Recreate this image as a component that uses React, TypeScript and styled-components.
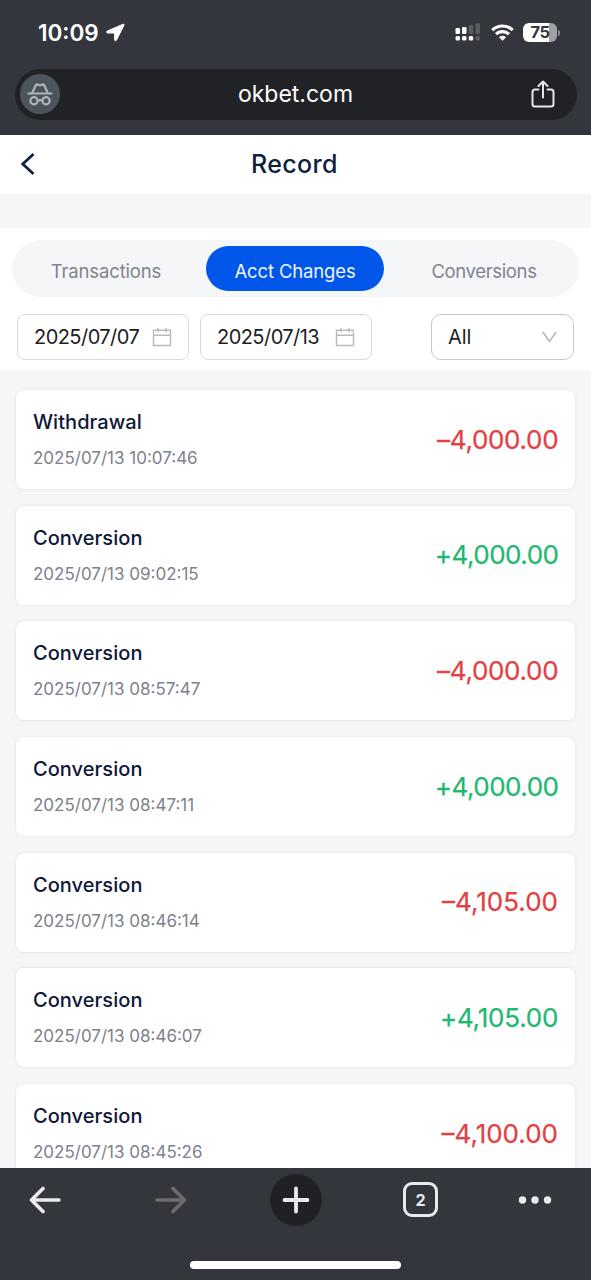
import React from "react";
import styled, { createGlobalStyle } from "styled-components";

const GlobalStyle = createGlobalStyle`
  * { box-sizing: border-box; }
  body {
    margin: 0;
    background: #f4f6f8;
    font-family: Inter, "Liberation Sans", sans-serif;
    -webkit-font-smoothing: antialiased;
  }
  svg { display: block; flex: none; }
`;

const Screen = styled.div`
  width: 591px;
  height: 1280px;
  display: flex;
  flex-direction: column;
  overflow: hidden;
  background: #f4f6f8;
`;

const BrowserTop = styled.header`
  flex: none;
  height: 135px;
  background: #33363d;
  color: #fff;
  display: flex;
  flex-direction: column;
`;

const StatusBar = styled.div`
  height: 69px;
  padding: 19px 31px 0 38px;
  display: flex;
  align-items: flex-start;
  justify-content: space-between;
`;

const StatusGroup = styled.div<{ $gap: number }>`
  display: flex;
  align-items: center;
  gap: ${(p) => p.$gap}px;
  height: 27px;
`;

const Clock = styled.span`
  font-size: 22.5px;
  line-height: 27px;
  font-weight: 600;
  letter-spacing: 0;
`;

const Battery = styled.div`
  display: flex;
  align-items: center;
  gap: 1px;
`;

const BatteryBody = styled.div`
  width: 34px;
  height: 19px;
  border-radius: 6px;
  background: linear-gradient(90deg, #fff 76%, #a0a1a4 76%);
  color: #33363d;
  font-size: 16.5px;
  font-weight: 700;
  line-height: 19px;
  letter-spacing: -0.5px;
  text-align: center;
`;

const BatteryTip = styled.div`
  width: 2px;
  height: 6px;
  border-radius: 0 2px 2px 0;
  background: #8b8c90;
`;

const AddressBar = styled.div`
  margin: 0 14px 0 15px;
  height: 51px;
  border-radius: 26px;
  background: #212226;
  display: grid;
  grid-template-columns: 50px 1fr 50px;
  align-items: center;
  padding: 0 9px 2px 5px;
`;

const Incognito = styled.div`
  width: 40px;
  height: 40px;
  border-radius: 50%;
  background: #4d555c;
  display: flex;
  align-items: center;
  justify-content: center;
`;

const Url = styled.div`
  padding-left: 3px;
  text-align: center;
  font-size: 23px;
  line-height: 30px;
`;

const PageHeader = styled.div`
  flex: none;
  height: 59px;
  background: #fff;
  display: grid;
  grid-template-columns: 60px 1fr 62px;
  align-items: center;
  padding-bottom: 2px;
`;

const BackButton = styled.button`
  border: 0;
  background: none;
  padding: 0 0 0 18px;
`;

const PageTitle = styled.h1`
  margin: 0;
  text-align: center;
  color: #10203f;
  font-size: 25px;
  line-height: 30px;
  font-weight: 500;
  letter-spacing: 0.35px;
`;

const Filters = styled.section`
  flex: none;
  margin-top: 34px;
  height: 143px;
  background: #fff;
  padding: 12px 12px 0;
`;

const Tabs = styled.div`
  height: 57px;
  border-radius: 29px;
  background: #f4f6f8;
  display: grid;
  grid-template-columns: 178px 178px 178px;
  justify-content: space-between;
  align-items: center;
  padding: 0 6px 0 5px;
`;

const Tab = styled.button<{ $active?: boolean; $spacing: number }>`
  border: 0;
  height: 45px;
  border-radius: 23px;
  padding: 4px 0 0;
  font: 400 18.5px/24px Inter, sans-serif;
  letter-spacing: ${(p) => p.$spacing}px;
  color: ${(p) => (p.$active ? "#eef5ff" : "#7f848f")};
  background: ${(p) => (p.$active ? "#0056e8" : "transparent")};
`;

const FieldRow = styled.div`
  display: flex;
  gap: 11px;
  margin: 17px 5px 0 5px;
`;

const Field = styled.div<{ $width: number; $select?: boolean }>`
  width: ${(p) => p.$width}px;
  height: 46px;
  border: 1.5px solid ${(p) => (p.$select ? "#c3c9d0" : "#d9dadc")};
  border-radius: ${(p) => (p.$select ? 10 : 8)}px;
  padding: 0 16px;
  margin-left: ${(p) => (p.$select ? "auto" : "0")};
  display: flex;
  align-items: center;
  justify-content: space-between;
  color: #1c1e24;
  font-size: 20px;
  letter-spacing: ${(p) => (p.$select ? -0.1 : -0.55)}px;
`;

const List = styled.main`
  flex: 1;
  min-height: 0;
  overflow: hidden;
  padding: 18px 15px 0 15px;
  display: flex;
  flex-direction: column;
  gap: 14.7px;
`;

const Card = styled.article`
  flex: none;
  height: 101px;
  border: 1px solid #ebedef;
  border-radius: 9px;
  background: #fff;
  box-shadow: 0 0 3px rgba(30, 40, 60, 0.04);
  padding: 0 17px;
  display: flex;
  align-items: center;
  justify-content: space-between;
`;

const CardTitle = styled.div`
  color: #101838;
  font-size: 20px;
  font-weight: 500;
  line-height: 26px;
  letter-spacing: 0.05px;
`;

const CardTime = styled.div`
  margin-top: 11px;
  color: #7d818b;
  font-size: 17px;
  line-height: 24px;
`;

const Amount = styled.div<{ $credit: boolean; $spacing: number }>`
  color: ${(p) => (p.$credit ? "#1fb871" : "#e34044")};
  font-size: 26px;
  line-height: 32px;
  letter-spacing: ${(p) => p.$spacing}px;
  margin-right: ${(p) => p.$spacing}px;
  -webkit-text-stroke: 0.25px currentColor;
`;

const BrowserBottom = styled.footer`
  flex: none;
  height: 112px;
  background: #33363d;
  display: flex;
  flex-direction: column;
  align-items: center;
`;

const Toolbar = styled.nav`
  width: 100%;
  height: 63px;
  padding: 0 22px 0 0;
  display: grid;
  grid-template-columns: 90px 161px 89px 161px 1fr;
  align-items: center;
  justify-items: center;
`;

const NewTab = styled.div`
  width: 52px;
  height: 52px;
  border-radius: 50%;
  background: #202125;
  display: flex;
  align-items: center;
  justify-content: center;
`;

const TabCount = styled.div`
  width: 35px;
  height: 35px;
  border: 3px solid #e9eaf0;
  border-radius: 9px;
  color: #e9eaf0;
  font-size: 16px;
  font-weight: 700;
  line-height: 30px;
  text-align: center;
`;

const HomeIndicator = styled.div`
  margin-top: 30px;
  width: 211px;
  height: 8px;
  border-radius: 4px;
  background: #fff;
`;

const CalendarIcon = () => (
  <svg width="20" height="20" viewBox="0 0 20 20" fill="none" stroke="#b9babd" strokeWidth="1.4">
    <path d="M1.500 3.200h17v15.300h-17zM1.500 8.200h17M6 1v4.400M14 1v4.400" />
  </svg>
);

const records = [
  { title: "Withdrawal", time: "2025/07/13 10:07:46", amount: "–4,000.00" },
  { title: "Conversion", time: "2025/07/13 09:02:15", amount: "+4,000.00" },
  { title: "Conversion", time: "2025/07/13 08:57:47", amount: "–4,000.00" },
  { title: "Conversion", time: "2025/07/13 08:47:11", amount: "+4,000.00" },
  { title: "Conversion", time: "2025/07/13 08:46:14", amount: "–4,105.00" },
  { title: "Conversion", time: "2025/07/13 08:46:07", amount: "+4,105.00" },
  { title: "Conversion", time: "2025/07/13 08:45:26", amount: "–4,100.00" },
];

// Narrow figures get looser tracking so the amounts keep an even column.
const amountSpacing = (amount: string) =>
  (amount.startsWith("+") ? -0.5 : -0.3) + (amount.includes(",1") ? 0.3 : 0);

export default function App() {
  return (
    <Screen>
      <GlobalStyle />
      <BrowserTop>
        <StatusBar>
          <StatusGroup $gap={7}>
            <Clock>10:09</Clock>
            <svg width="19" height="19" viewBox="0 0 19 19">
              <path d="M17 1.300 1.300 8c-1 .5-.7 2 .3 2h7v6.700c0 1.300 1.300 1.500 1.900.3L18 2.200c.3-.7-.2-1.200-1-.9z" fill="#fff" stroke="#fff" strokeWidth="1" strokeLinejoin="round" />
            </svg>
          </StatusGroup>
          <StatusGroup $gap={9.5}>
            <svg width="26" height="19" viewBox="0 0 26 19" fill="#fff">
              <rect x="0.500" y="5" width="4.500" height="6" rx="1.300" />
              <rect x="7" y="4" width="4.500" height="7" rx="1.300" />
              <rect x="13.700" y="2" width="4.500" height="9" rx="1.300" fill="#5b5c60" />
              <rect x="20.500" y="0.500" width="4.500" height="10.500" rx="1.300" fill="#5b5c60" />
              <rect x="0.500" y="13" width="4.500" height="4.500" rx="1.500" />
              <rect x="7" y="13" width="4.500" height="4.500" rx="1.500" />
              <rect x="13.700" y="13" width="4.500" height="4.500" rx="1.500" />
              <rect x="20.500" y="13" width="4.500" height="4.500" rx="1.500" fill="#5b5c60" />
            </svg>
            <svg width="23" height="17" viewBox="0 0 23 17" fill="none" stroke="#fff" strokeWidth="3.200">
              <path d="M1.300 6.200a14.500 14.500 0 0 1 20.400 0M5 10.200a9.300 9.300 0 0 1 13 0" />
              <path d="m11.500 16.800-3.500-3.600a5 5 0 0 1 7 0z" fill="#fff" stroke="none" />
            </svg>
            <Battery>
              <BatteryBody>75</BatteryBody>
              <BatteryTip />
            </Battery>
          </StatusGroup>
        </StatusBar>
        <AddressBar>
          <Incognito>
            <svg width="26" height="24" viewBox="0 0 26 24" fill="none" stroke="#b0b5ba" strokeWidth="2.200" strokeLinecap="round" strokeLinejoin="round">
              <path d="M1.500 11.500h23M5.200 11 9 2.800l1.400-.5 1 .9h3.200l1-.9 1.400.5L20.800 11" />
              <circle cx="7" cy="18.800" r="3.600" />
              <circle cx="19" cy="18.800" r="3.600" />
              <path d="M10.800 18.500q2.200-1 4.400 0" />
            </svg>
          </Incognito>
          <Url>okbet.com</Url>
          <svg width="24" height="28" viewBox="0 0 24 28" fill="none" stroke="#e6e7eb" strokeWidth="2" strokeLinecap="round" strokeLinejoin="round" style={{ justifySelf: "center" }}>
            <path d="M7.500 9.500H4a2.500 2.500 0 0 0-2.500 2.500v12A2.500 2.500 0 0 0 4 26.500h16a2.500 2.500 0 0 0 2.500-2.500V12A2.500 2.500 0 0 0 20 9.500h-3.500M12 17.500V2M7.500 6 12 1.500 16.500 6" />
          </svg>
        </AddressBar>
      </BrowserTop>

      <PageHeader>
        <BackButton aria-label="Back">
          <svg width="18" height="24" viewBox="0 0 18 24" fill="none" stroke="#10203f" strokeWidth="2.800">
            <path d="M15.500 2 4.800 12l10.700 10" />
          </svg>
        </BackButton>
        <PageTitle>Record</PageTitle>
      </PageHeader>

      <Filters>
        <Tabs>
          <Tab $spacing={-0.15}>Transactions</Tab>
          <Tab $active $spacing={-0.15}>Acct Changes</Tab>
          <Tab $spacing={-0.35}>Conversions</Tab>
        </Tabs>
        <FieldRow>
          <Field $width={172}>2025/07/07<CalendarIcon /></Field>
          <Field $width={172}>2025/07/13<CalendarIcon /></Field>
          <Field $width={143} $select>
            All
            <svg width="15" height="12" viewBox="0 0 15 12" fill="none" stroke="#b4b6bb" strokeWidth="1.500">
              <path d="m.8 1 6.700 9.500L14.200 1" />
            </svg>
          </Field>
        </FieldRow>
      </Filters>

      <List>
        {records.map((r) => (
          <Card key={r.time}>
            <div>
              <CardTitle>{r.title}</CardTitle>
              <CardTime>{r.time}</CardTime>
            </div>
            <Amount $credit={r.amount.startsWith("+")} $spacing={amountSpacing(r.amount)}>
              {r.amount}
            </Amount>
          </Card>
        ))}
      </List>

      <BrowserBottom>
        <Toolbar>
          <svg width="32" height="28" viewBox="0 0 32 28" fill="none" stroke="#e9eaf0" strokeWidth="3.600" strokeLinecap="round" strokeLinejoin="round">
            <path d="M30 14H2.500M14 2.500 2.500 14 14 25.500" />
          </svg>
          <svg width="32" height="28" viewBox="0 0 32 28" fill="none" stroke="#6c6c6e" strokeWidth="3.600" strokeLinecap="round" strokeLinejoin="round">
            <path d="M2 14h27.500M18 2.500 29.500 14 18 25.500" />
          </svg>
          <NewTab>
            <svg width="28" height="28" viewBox="0 0 28 28" fill="none" stroke="#e9eaf0" strokeWidth="3.800" strokeLinecap="round">
              <path d="M14 2.500v23M2.500 14h23" />
            </svg>
          </NewTab>
          <TabCount>2</TabCount>
          <svg width="34" height="8" viewBox="0 0 34 8" fill="#e9eaf0">
            <circle cx="4.500" cy="4" r="3.700" />
            <circle cx="17" cy="4" r="3.700" />
            <circle cx="29.500" cy="4" r="3.700" />
          </svg>
        </Toolbar>
        <HomeIndicator />
      </BrowserBottom>
    </Screen>
  );
}
